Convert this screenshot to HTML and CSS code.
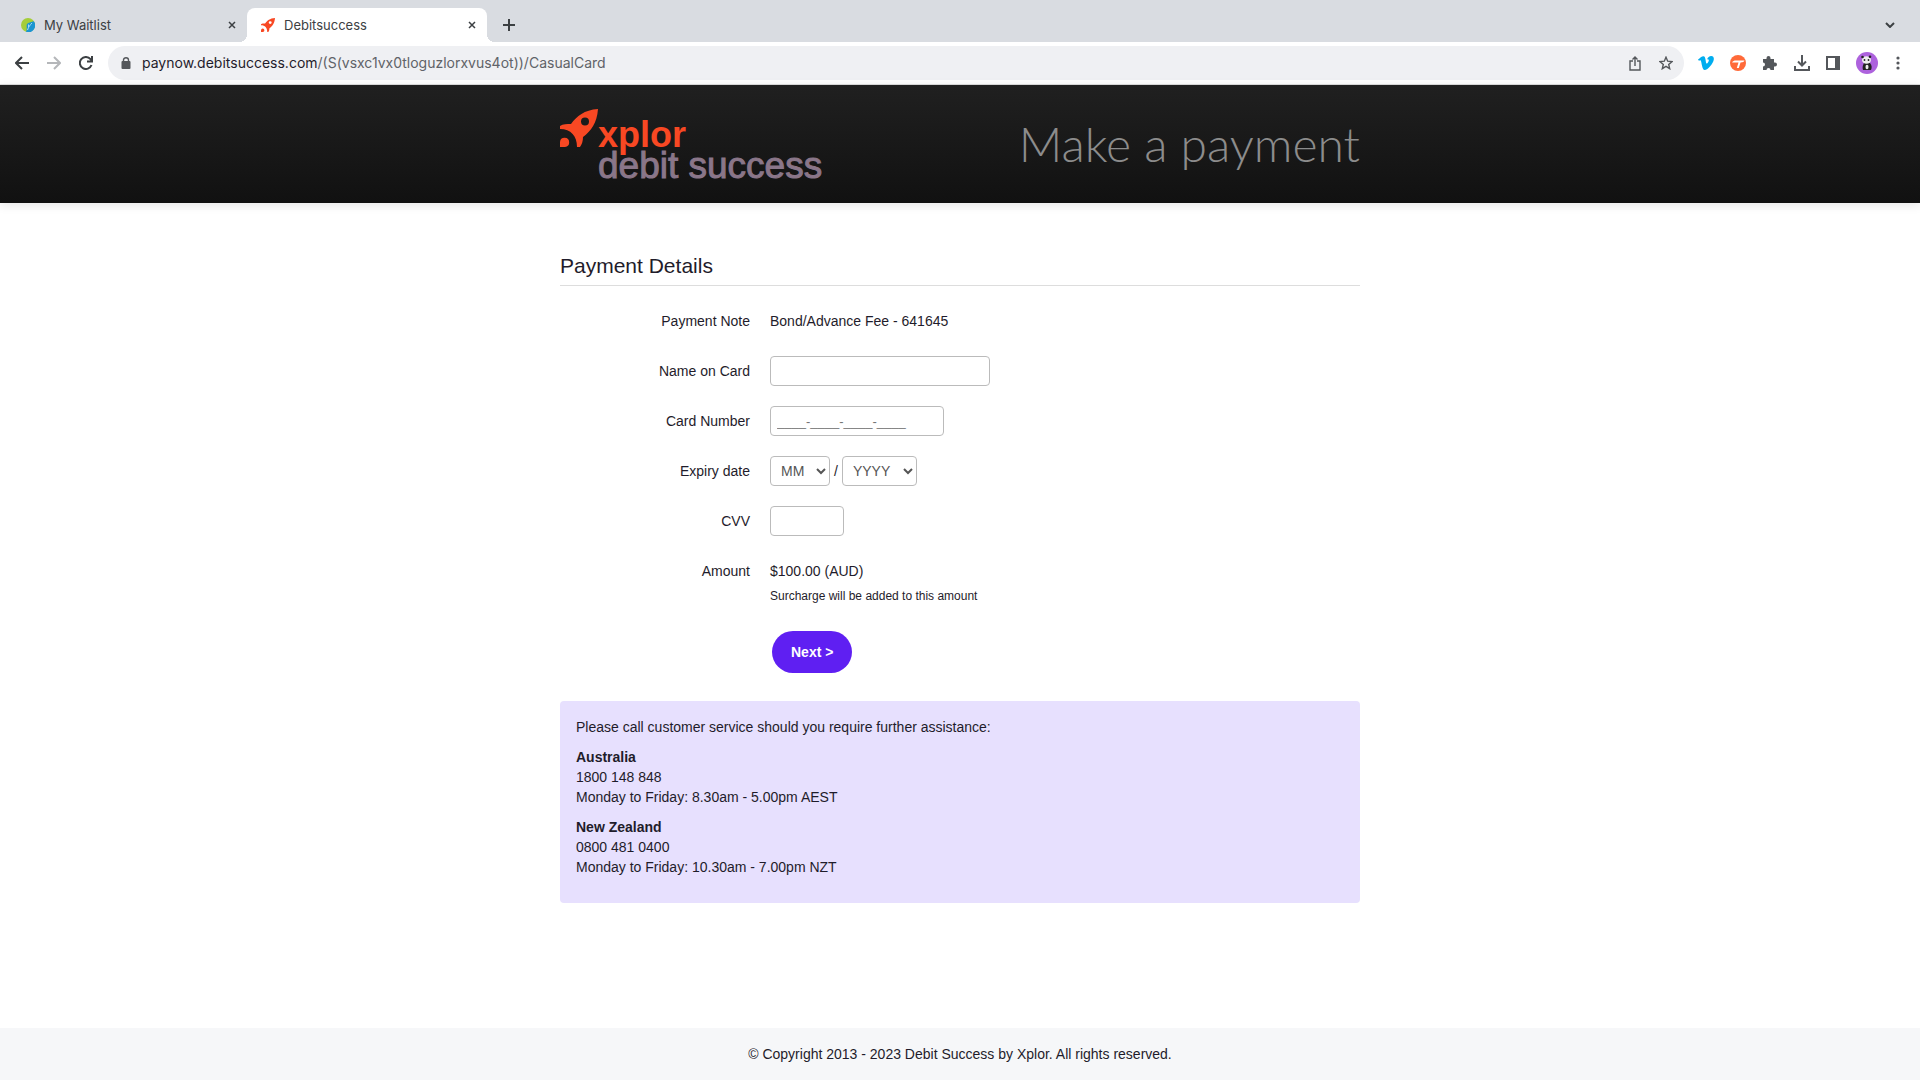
FILE: index.html
```html
<!DOCTYPE html>
<html lang="en">
<head>
  <meta charset="utf-8">
  <title>Debitsuccess</title>
  <link rel="stylesheet" href="styles.css">
</head>
<body>

  <div class="browser">
    <div class="tabs">
      <div class="tab">
        <svg class="favicon" width="14" height="14" viewBox="0 0 14 14">
          <circle cx="7" cy="7" r="7" fill="#a5cd39"/>
          <path d="M5 14 C6.500 11 5 8 6 6 C7.500 4.500 10 4 12.800 3.200 A7 7 0 0 1 5 14 Z" fill="#1b95d1"/>
          <path d="M6.500 12 C7.500 9 9 7 11 5 M7.500 9 V6.500" fill="none" stroke="#a8dcf2"/>
        </svg>
        <span class="tab-title">My Waitlist</span>
        <button class="tab-close" aria-label="Close tab">
          <svg width="8" height="8" viewBox="0 0 8 8"><path d="M1 1 L7 7 M7 1 L1 7"/></svg>
        </button>
      </div>
      <div class="tab active">
        <svg class="favicon" width="14" height="14" viewBox="0 0 38 38">
          <use href="#rocket"/>
        </svg>
        <span class="tab-title">Debitsuccess</span>
        <button class="tab-close" aria-label="Close tab">
          <svg width="8" height="8" viewBox="0 0 8 8"><path d="M1 1 L7 7 M7 1 L1 7"/></svg>
        </button>
      </div>
      <button class="new-tab" aria-label="New tab">
        <svg width="12" height="12" viewBox="0 0 12 12"><path d="M6 0 V12 M0 6 H12"/></svg>
      </button>
      <button class="tab-search" aria-label="Search tabs">
        <svg width="10" height="6" viewBox="0 0 10 6"><path d="M1 1 L5 5 L9 1"/></svg>
      </button>
    </div>

    <div class="toolbar">
      <button class="nav-button" aria-label="Back">
        <svg width="14" height="14" viewBox="0 0 14 14"><path d="M14 7 H1 M7 1 L1 7 L7 13"/></svg>
      </button>
      <button class="nav-button forward" aria-label="Forward">
        <svg width="14" height="14" viewBox="0 0 14 14"><path d="M0 7 H13 M7 1 L13 7 L7 13"/></svg>
      </button>
      <button class="nav-button" aria-label="Reload">
        <svg width="14" height="14" viewBox="0 0 14 14"><path d="M12.500 9 A6 6 0 1 1 11.500 3.200 L13 5 M13 0 V5.500 H8"/></svg>
      </button>
      <div class="address">
        <svg width="10" height="12" viewBox="0 0 10 12">
          <rect x="0.500" y="4" width="9" height="8" rx="1" fill="#54575b"/>
          <path d="M2.500 5 V3 A2.500 2.300 0 0 1 7.500 3 V5" fill="none" stroke="#54575b" stroke-width="1.400"/>
        </svg>
        <span class="url">paynow.debitsuccess.com<span class="path">/(S(vsxc1vx0tloguzlorxvus4ot))/CasualCard</span></span>
        <button class="address-button" aria-label="Share">
          <svg width="12" height="15" viewBox="0 0 12 15"><path d="M4 5 H1 V14 H11 V5 H8 M6 10 V1 M3.500 3.500 L6 1 L8.500 3.500"/></svg>
        </button>
        <button class="address-button" aria-label="Bookmark">
          <svg width="14" height="14" viewBox="0 0 14 14"><path d="M7 1.200 L8.700 5.200 L13 5.600 L9.700 8.400 L10.700 12.700 L7 10.400 L3.300 12.700 L4.300 8.400 L1 5.600 L5.300 5.200 Z"/></svg>
        </button>
      </div>
      <div class="extensions">
        <svg width="16" height="16" viewBox="0 0 16 16"><path d="M0 4.500 C2 3 4 1 5.500 1.200 C8 1.400 7.500 7.500 8.500 8.500 C9.500 9 11 6 10.800 5 C10.600 4 9.500 4.300 9 4.600 C9.800 2 11.500 0.800 13.300 0.900 C15.500 1 16.200 2.800 15.700 5 C15 8.500 10 15 6.700 15 C4 15 3.700 7 2.700 5.500 C2.300 5 1.500 5.500 0.900 5.800 Z" fill="#00adef"/></svg>
        <svg width="16" height="16" viewBox="0 0 16 16">
          <circle cx="8" cy="8" r="8" fill="#ff6a39"/>
          <path d="M2 7.500 C3 6 4 5.600 6 5.600 H14.500 C14 7 13 7.400 10.500 7.400 L8.800 13 H6.800 L8.500 7.400 H5.500 C4 7.400 3 7.500 2 7.500 Z" fill="#fff"/>
        </svg>
        <svg width="16" height="16" viewBox="0 0 16 16"><path d="M1 4 H4.500 V3 A2 2 0 0 1 8.500 3 V4 H12 V7.500 H13 A2 2 0 0 1 13 11.500 H12 V15 H8.500 A2 2 0 0 0 4.500 15 H1 V11.500 A2 2 0 0 0 1 7.500 Z" fill="#54575b"/></svg>
        <svg width="16" height="16" viewBox="0 0 16 16"><path d="M8 0 V10 M4 6.500 L8 10.500 L12 6.500 M1 11 V15 H15 V11" fill="none" stroke="#54575b" stroke-width="2"/></svg>
        <svg width="14" height="14" viewBox="0 0 14 14"><path d="M0 0 H14 V14 H0 Z M2 2 V12 H9 V2 Z" fill="#54575b" fill-rule="evenodd"/></svg>
        <svg width="22" height="22" viewBox="0 0 22 22">
          <circle cx="11" cy="11" r="11" fill="#ad62dd"/>
          <path d="M8 11 H14 C16 13 16 16 15 18 H7 C6 15 7 13 8 11 Z" fill="#222"/>
          <ellipse cx="10.500" cy="8" rx="4.500" ry="3.800" fill="#eee"/>
          <circle cx="6.500" cy="5" r="1.300" fill="#222"/>
          <circle cx="14" cy="4.700" r="1.300" fill="#222"/>
          <circle cx="8.500" cy="8" r="0.900" fill="#222"/>
          <circle cx="12.500" cy="8" r="0.900" fill="#222"/>
          <ellipse cx="11" cy="15" rx="1.500" ry="2.200" fill="#eee"/>
        </svg>
        <svg class="menu" width="4" height="14" viewBox="0 0 4 14"><circle cx="2" cy="2" r="1.600"/><circle cx="2" cy="7" r="1.600"/><circle cx="2" cy="12" r="1.600"/></svg>
      </div>
    </div>
  </div>

  <header class="header">
    <div class="container header-inner">
      <div class="logo">
        <svg width="38" height="38" viewBox="0 0 38 38">
          <g id="rocket" fill="#f84823">
            <path fill-rule="evenodd" d="M38 0 C37 14 31 22 23 28 C23 32 22 35 20 38 H17 C17 27 11 20 0 20 V17 C3 15 7 15 11 15 C17 7 24 1 38 0 Z M29 12.500 A4 4 0 1 0 21 12.500 A4 4 0 1 0 29 12.500 Z"/>
            <path d="M0 38 V33 A4.600 4.600 0 1 1 5 38 Z"/>
          </g>
        </svg>
        <div class="logo-text">
          <span class="logo-xplor">xplor</span>
          <span class="logo-debit">debit success</span>
        </div>
      </div>
      <h1>Make a payment</h1>
    </div>
  </header>

  <main class="container">
    <h2>Payment Details</h2>

    <form class="form">
      <span class="label">Payment Note</span>
      <div class="field">Bond/Advance Fee - 641645</div>

      <label class="label" for="name">Name on Card</label>
      <div class="field"><input id="name" class="input-name" type="text"></div>

      <label class="label" for="number">Card Number</label>
      <div class="field"><input id="number" class="input-number" type="text" placeholder="____-____-____-____"></div>

      <label class="label" for="month">Expiry date</label>
      <div class="field expiry">
        <select id="month" class="month"><option>MM</option></select>
        <span>/</span>
        <select class="year" aria-label="Expiry year"><option>YYYY</option></select>
      </div>

      <label class="label" for="cvv">CVV</label>
      <div class="field"><input id="cvv" class="input-cvv" type="text"></div>

      <span class="label">Amount</span>
      <div class="field">$100.00 (AUD)</div>

      <p class="surcharge">Surcharge will be added to this amount</p>
      <button class="next" type="button">Next &gt;</button>
    </form>

    <section class="help">
      <p>Please call customer service should you require further assistance:</p>
      <p><strong>Australia</strong><br>1800 148 848<br>Monday to Friday: 8.30am - 5.00pm AEST</p>
      <p><strong>New Zealand</strong><br>0800 481 0400<br>Monday to Friday: 10.30am - 7.00pm NZT</p>
    </section>
  </main>

  <footer class="footer">© Copyright 2013 - 2023 Debit Success by Xplor. All rights reserved.</footer>

</body>
</html>
```

FILE: styles.css
```css
* {
  box-sizing: border-box;
}
body {
  margin: 0;
  min-height: 100vh;
  display: flex;
  flex-direction: column;
  background: #fff;
  color: #1f1c2b;
  font-family: "Liberation Sans", Arial, sans-serif;
  font-size: 14px;
  line-height: 20px;
}
button, input, select {
  font: inherit;
  color: inherit;
}
svg {
  display: block;
  flex-shrink: 0;
}

/* browser bar */
.browser {
  font-family: Inter, sans-serif;
  border-bottom: 1px solid #ddd;
}
.browser button {
  border: 0;
  padding: 0;
  background: none;
}
.browser button svg {
  fill: none;
  stroke: #3c4043;
  stroke-width: 2;
}
.tabs {
  display: flex;
  align-items: center;
  height: 42px;
  padding: 8px 25px 0 7px;
  background: #d9dce1;
}
.tab {
  display: flex;
  align-items: center;
  gap: 9px;
  width: 240px;
  height: 34px;
  padding: 0 11px 0 14px;
  font-size: 13px;
  color: #3c4043;
}
.tab.active {
  position: relative;
  background: #fff;
  border-radius: 8px 8px 0 0;
}
/* curved feet of the open tab */
.tab.active::before,
.tab.active::after {
  content: "";
  position: absolute;
  bottom: 0;
  width: 8px;
  height: 8px;
}
.tab.active::before {
  left: -8px;
  background: radial-gradient(circle at 0 0, #d9dce1 8px, #fff 8px);
}
.tab.active::after {
  right: -8px;
  background: radial-gradient(circle at 100% 0, #d9dce1 8px, #fff 8px);
}
.tab-title {
  flex: 1;
}
.browser .tab-close svg {
  stroke-width: 1.5;
}
.new-tab {
  margin: 0 auto 0 16px;
}
.toolbar {
  display: flex;
  align-items: center;
  height: 42px;
  padding: 0 20px 0 15px;
}
.nav-button {
  margin-right: 18px;
}
.browser .forward svg {
  stroke: #b5b7ba;
}
.address {
  flex: 1;
  display: flex;
  align-items: center;
  gap: 18px;
  height: 34px;
  margin-left: -3px;
  padding: 0 11px 0 13px;
  border-radius: 17px;
  background: #eff0f3;
  font-size: 14px;
}
.url {
  flex: 1;
  margin-left: -7px;
}
.path {
  color: #5f6368;
}
.browser .address-button svg {
  stroke: #54575b;
  stroke-width: 1.4;
}
.extensions {
  display: flex;
  align-items: center;
  gap: 16px;
  margin-left: 14px;
}
.menu {
  margin-left: 2px;
  fill: #54575b;
}

/* page */
.container {
  width: 100%;
  max-width: 800px;
  margin: 0 auto;
}
.header {
  padding: 24px 0 22px;
  background: linear-gradient(#202020, #111);
  box-shadow: 0 2px 10px rgba(0, 0, 0, 0.1);
}
.header-inner {
  display: flex;
  justify-content: space-between;
}
.logo {
  display: flex;
}
.logo-text {
  display: flex;
  flex-direction: column;
  padding-top: 10px;
  line-height: 30px;
}
.logo-xplor {
  color: #f84823;
  font-size: 36px;
  font-weight: bold;
  line-height: 32px;
}
.logo-debit {
  color: #8a7689;
  font-size: 37px;
  -webkit-text-stroke: 1px #8a7689;
}
h1 {
  margin: 0;
  color: #8c8c8c;
  font-family: Lato, sans-serif;
  font-size: 48px;
  font-weight: 300;
  line-height: 70px;
}
main {
  flex: 1;
}
h2 {
  margin: 50px 0 20px;
  padding-bottom: 7px;
  border-bottom: 1px solid #ddd;
  font-size: 21px;
  font-weight: normal;
  line-height: 25px;
}
.form {
  display: grid;
  grid-template-columns: 190px 1fr;
  column-gap: 20px;
  row-gap: 20px;
}
.label {
  text-align: right;
  line-height: 30px;
}
.field {
  line-height: 30px;
  height: 30px;
}
input, select {
  display: block;
  height: 30px;
  border: 1px solid #bbb;
  border-radius: 4px;
  background: #fff;
}
input {
  padding: 4px 6px;
}
input::placeholder {
  font-size: 13px;
}
.input-name {
  width: 220px;
}
.input-number {
  width: 174px;
}
.input-cvv {
  width: 74px;
}
.expiry {
  display: flex;
  gap: 4px;
}
select {
  padding: 0 0 0 6px;
  color: #555;
}
.month {
  width: 60px;
}
.year {
  width: 75px;
}
.surcharge {
  grid-column: 2;
  margin: -20px 0 0;
  font-size: 12px;
}
.next {
  grid-column: 2;
  justify-self: start;
  margin: 5px 2px 28px;
  height: 42px;
  padding: 0 19px;
  border: 0;
  border-radius: 21px;
  background: #5f1ff2;
  color: #fff;
  font-weight: bold;
}
.help {
  padding: 16px;
  border-radius: 4px;
  background: #e7e0fe;
}
.help p {
  margin: 0 0 10px;
}
.footer {
  padding: 16px;
  background: #f6f7f9;
  text-align: center;
}
```
